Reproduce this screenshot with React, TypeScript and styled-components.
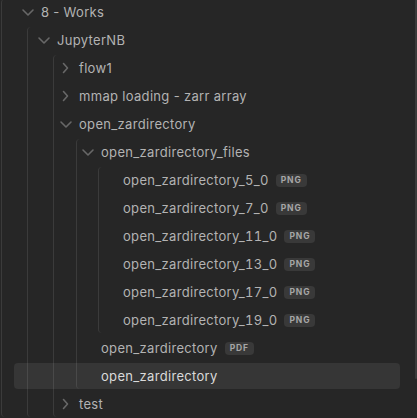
import styled, { createGlobalStyle } from 'styled-components';

const GlobalStyle = createGlobalStyle`
  html, body {
    margin: 0;
    background: #262626;
    overflow: hidden;
  }
`;

const Page = styled.div`
  display: flex;
  width: 417px;
  height: 418px;
  overflow: hidden;
  background: #262626;
  font-family: Inter, 'Noto Sans', sans-serif;
  font-size: 13px;
`;

const Tree = styled.div`
  flex: 1;
  padding-right: 15px;
  min-width: 0;
`;

const ScrollTrack = styled.div`
  width: 2px;
  display: flex;
  flex-direction: column;
`;

const ScrollThumb = styled.div`
  height: 379px;
  background: #3a3a3a;
  border-radius: 0 0 2px 2px;
`;

const Guide = styled.div<{ $offset: number; $top?: number }>`
  margin-left: ${(p) => p.$offset}px;
  margin-top: ${(p) => p.$top ?? 0}px;
  border-left: 1px solid #3b3b3b;
  border-radius: 4px 0 0 4px;
`;

const Row = styled.div<{ $pad: number; $active?: boolean; $shift?: number }>`
  display: flex;
  align-items: center;
  height: 26px;
  margin-bottom: 2px;
  margin-left: ${(p) => p.$shift ?? 0}px;
  padding-left: ${(p) => p.$pad}px;
  border-radius: 4px;
  color: ${(p) => (p.$active ? '#dadada' : '#b3b3b3')};
  background: ${(p) => (p.$active ? 'rgba(255, 255, 255, 0.075)' : 'transparent')};
  white-space: nowrap;
`;

const Toggle = styled.svg`
  width: 16px;
  height: 16px;
  margin-right: 5px;
  flex-shrink: 0;
`;

const Label = styled.span<{ $tabular?: boolean }>`
  line-height: 1;
  letter-spacing: 0.32px;
  font-variant-numeric: ${(p) => (p.$tabular ? 'tabular-nums' : 'normal')};
`;

const Tag = styled.span`
  display: inline-flex;
  align-items: center;
  height: 13px;
  margin-left: 7px;
  padding: 0 5px;
  border-radius: 4px;
  background: #393939;
  color: #a6a6a6;
  font-size: 8.5px;
  font-weight: 700;
  letter-spacing: 0.9px;
`;

const Chevron = ({ open }: { open: boolean }) => (
  <Toggle viewBox="0 0 16 16" fill="none" stroke="#686868" strokeWidth={1.6} strokeLinecap="round" strokeLinejoin="round">
    {open ? <path d="M3 6l5 5 5-5" /> : <path d="M5.5 3.5l4 4.5-4 4.5" />}
  </Toggle>
);

const images = ['5_0', '7_0', '11_0', '13_0', '17_0', '19_0'];

export default function App() {
  return (
    <Page>
      <GlobalStyle />
      <Tree>
        <Guide $offset={1} $top={-1}>
          <Row $pad={18}>
            <Chevron open />
            <Label>8 - Works</Label>
          </Row>
          <Guide $offset={25}>
            <Row $pad={8}>
              <Chevron open />
              <Label>JupyterNB</Label>
            </Row>
            <Guide $offset={25}>
              <Row $pad={4}>
                <Chevron open={false} />
                <Label>flow1</Label>
              </Row>
              <Row $pad={4}>
                <Chevron open={false} />
                <Label>mmap loading - zarr array</Label>
              </Row>
              <Row $pad={4}>
                <Chevron open />
                <Label>open_zardirectory</Label>
              </Row>
              <Guide $offset={22}>
                <Row $pad={3}>
                  <Chevron open />
                  <Label>open_zardirectory_files</Label>
                </Row>
                <Guide $offset={21}>
                  {images.map((n) => (
                    <Row key={n} $pad={24}>
                      <Label $tabular>open_zardirectory_{n}</Label>
                      <Tag>PNG</Tag>
                    </Row>
                  ))}
                </Guide>
                <Row $pad={24}>
                  <Label>open_zardirectory</Label>
                  <Tag>PDF</Tag>
                </Row>
                <Row $pad={87} $shift={-63} $active>
                  <Label>open_zardirectory</Label>
                </Row>
              </Guide>
              <Row $pad={4}>
                <Chevron open={false} />
                <Label>test</Label>
              </Row>
            </Guide>
          </Guide>
        </Guide>
      </Tree>
      <ScrollTrack>
        <ScrollThumb />
      </ScrollTrack>
    </Page>
  );
}
